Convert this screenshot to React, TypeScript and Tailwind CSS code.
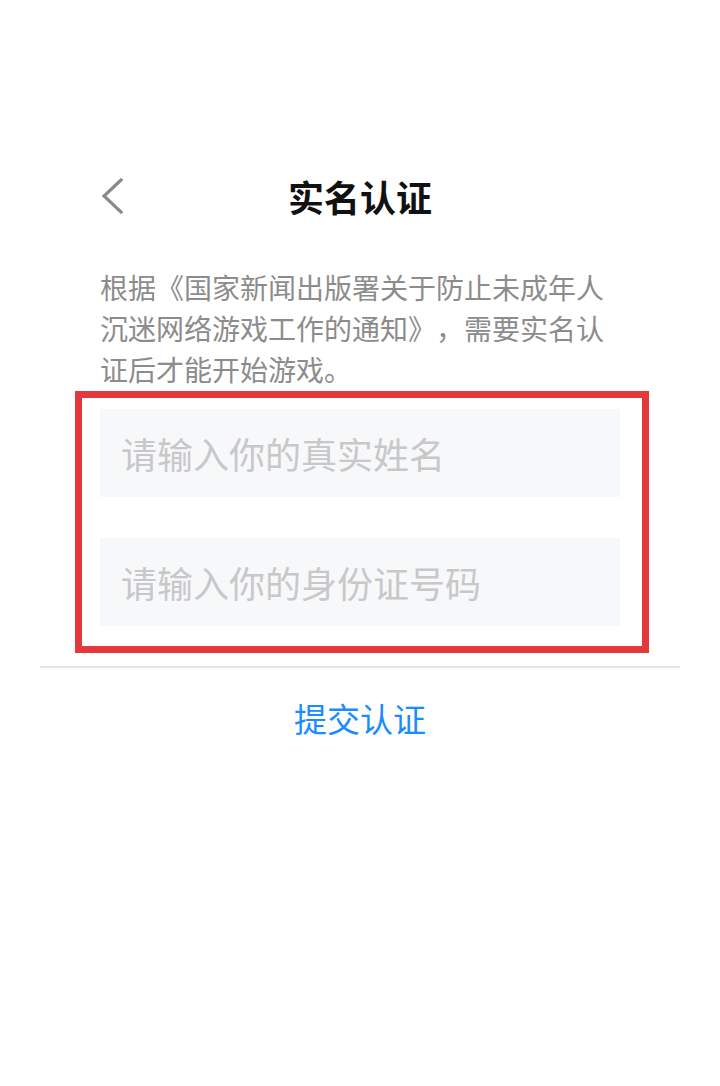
import React from "react";

const font = '"Noto Sans CJK SC", "Noto Sans", sans-serif';

export default function App() {
  return (
    <div
      className="min-h-[1086px] w-[720px] bg-white [text-spacing-trim:space-all]"
      style={{ fontFamily: font }}
    >
      <div className="px-[40px] pt-[160px]">
        <div className="px-[60px]">
          <div className="relative flex h-[72px] items-center justify-center">
            <svg
              className="absolute left-0 top-[18px]"
              width="24"
              height="36"
              viewBox="0 0 24 36"
              fill="none"
            >
              <path d="M21 2 L4 18 L21 34" stroke="#8a8a8a" strokeWidth="3.2" strokeLinecap="square" />
            </svg>
            <span className="text-[36px] font-bold leading-none text-[#111]">实名认证</span>
          </div>
          <p className="mt-[35px] text-[28px] leading-[41px] text-[#8c8c8c]">
            根据《国家新闻出版署关于防止未成年人沉迷网络游戏工作的通知》，需要实名认证后才能开始游戏。
          </p>
          <div className="relative mt-[19px] flex flex-col gap-[41px]">
            <div className="flex h-[88px] items-center bg-[#f7f8fa] px-[21px]">
              <span className="text-[36px] leading-none text-[#c8c8c8]">请输入你的真实姓名</span>
            </div>
            <div className="flex h-[88px] items-center bg-[#f7f8fa] px-[21px]">
              <span className="text-[36px] leading-none text-[#c8c8c8]">请输入你的身份证号码</span>
            </div>
            <div className="pointer-events-none absolute -left-[25px] -top-[18px] -right-[29px] -bottom-[27px] border-[7px] border-[#e5383b]" />
          </div>
        </div>
        <div className="mt-[40px] h-[2px] bg-[#e6e6e6]" />
        <div className="flex h-[100px] items-center justify-center">
          <span className="text-[33px] leading-none text-[#1a8cff]">提交认证</span>
        </div>
      </div>
    </div>
  );
}
